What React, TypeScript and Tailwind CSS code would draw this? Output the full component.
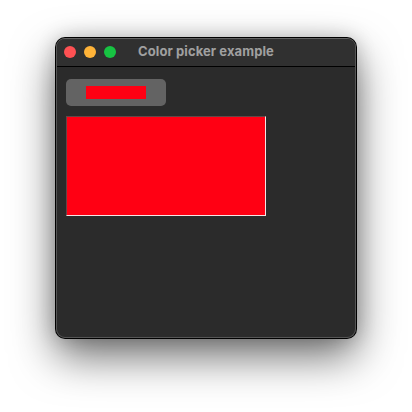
export default function App() {
  return (
    <main className="h-[412px] w-[412px] overflow-hidden bg-white pl-[56px] pt-[38px]">
      <section className="h-[300px] w-[300px] rounded-[9px] bg-[#2b2b2b] shadow-[0_0_0_1px_#000,0_18px_44px_rgba(0,0,0,0.58),0_0_20px_rgba(0,0,0,0.2)]">
        <div className="h-full overflow-hidden rounded-[9px] border border-[#555] border-t-[#626262]">
          <header className="grid h-[28px] grid-cols-[81px_1fr] items-start border-b border-black bg-[#303030]">
            <div className="flex gap-2 pl-[7px] pt-[7px]">
              <span className="size-3 rounded-full bg-[#ff5153]" />
              <span className="size-3 rounded-full bg-[#ffb338]" />
              <span className="size-3 rounded-full bg-[#17c342]" />
            </div>
            <h1 className="whitespace-nowrap pt-[4px] font-['Inter',sans-serif] text-[13px] font-bold leading-4 tracking-[0.09px] text-[#a0a0a0]">Color picker example</h1>
          </header>
          <div className="flex flex-col items-start gap-[10px] pl-[9px] pt-[12px]">
            <button aria-label="Choose color" className="flex h-[27px] w-[100px] items-center justify-center rounded-[5px] bg-[#636363]">
              <span className="h-[13px] w-[60px] bg-[#ff0013]" />
            </button>
            <div className="h-[100px] w-[200px] border border-b-[#f5e4e4] border-l-[#654646] border-r-[#f5e4e4] border-t-[#654646] bg-[#ff0013]" />
          </div>
        </div>
      </section>
    </main>
  );
}
